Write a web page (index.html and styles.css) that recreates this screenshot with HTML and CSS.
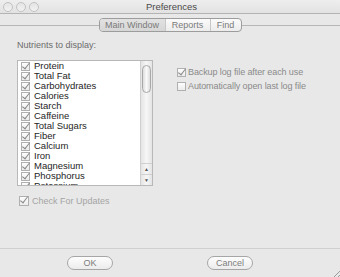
FILE: index.html
```html
<!DOCTYPE html>
<html lang="en">
<head>
    <meta charset="UTF-8">
    <title>Preferences</title>
    <link rel="stylesheet" href="styles.css">
</head>
<body>
<div class="window">
    <div class="titlebar">
        <div class="lights">
            <span class="light"></span>
            <span class="light"></span>
            <span class="light"></span>
        </div>
        <div class="title">Preferences</div>
    </div>

    <div class="tabbar">
        <div class="rule"></div>
        <div class="tabs">
            <span class="tab tab-main selected">Main Window</span>
            <span class="tab tab-reports">Reports</span>
            <span class="tab tab-find">Find</span>
        </div>
        <div class="rule"></div>
    </div>

    <div class="content">
        <div class="left">
            <div class="label">Nutrients to display:</div>
            <div class="listbox">
                <ul class="items">
                    <li><span class="box checked"></span>Protein</li>
                    <li><span class="box checked"></span>Total Fat</li>
                    <li><span class="box checked"></span>Carbohydrates</li>
                    <li><span class="box checked"></span>Calories</li>
                    <li><span class="box checked"></span>Starch</li>
                    <li><span class="box checked"></span>Caffeine</li>
                    <li><span class="box checked"></span>Total Sugars</li>
                    <li><span class="box checked"></span>Fiber</li>
                    <li><span class="box checked"></span>Calcium</li>
                    <li><span class="box checked"></span>Iron</li>
                    <li><span class="box checked"></span>Magnesium</li>
                    <li><span class="box checked"></span>Phosphorus</li>
                    <li><span class="box checked"></span>Potassium</li>
                </ul>
                <div class="scrollbar">
                    <div class="track"><div class="thumb"></div></div>
                    <div class="arrow">&#9650;</div>
                    <div class="arrow">&#9660;</div>
                </div>
            </div>
            <div class="option updates"><span class="box checked"></span>Check For Updates</div>
        </div>
        <div class="right">
            <div class="option"><span class="box checked"></span>Backup log file after each use</div>
            <div class="option"><span class="box"></span>Automatically open last log file</div>
        </div>
    </div>

    <div class="footer">
        <span class="button">OK</span>
        <span class="button">Cancel</span>
        <div class="grip"></div>
    </div>
</div>
</body>
</html>
```

FILE: styles.css
```css
body {
    margin: 0;
    font-family: "Liberation Sans", Arial, sans-serif;
    background-color: #e8e8e8;
}

.window {
    width: 340px;
    height: 277px;
    display: flex;
    flex-direction: column;
    overflow: hidden;
}

/* title bar */
.titlebar {
    height: 13px;
    border-bottom: 1px solid #b4b4b4;
    background: linear-gradient(#eeeeee, #e2e2e2);
    display: flex;
    align-items: center;
}

.lights {
    display: flex;
    gap: 3px;
    padding-left: 3px;
}

.light {
    width: 8px;
    height: 8px;
    border-radius: 50%;
    border: 1px solid #c2c2c2;
    background: linear-gradient(#e4e4e4, #f2f2f2);
}

.title {
    flex: 1;
    text-align: center;
    font-size: 9.5px;
    color: #4a4a4a;
    margin-right: 36px;
    line-height: 13px;
}

/* tab control */
.tabbar {
    display: flex;
    align-items: center;
    margin-top: 4px;
    height: 14px;
}

.rule {
    flex: 1;
    height: 1px;
    background-color: #b6b6b6;
}

.tabs {
    display: flex;
    height: 12px;
    border: 1px solid #9c9c9c;
    border-radius: 4px;
    background: linear-gradient(#fbfbfb, #ececec);
    overflow: hidden;
}

.tab {
    font-size: 9px;
    line-height: 12px;
    color: #7a7a7a;
    text-align: center;
    border-left: 1px solid #c8c8c8;
}

.tab-main {
    width: 65px;
    border-left: none;
}

.tab-reports {
    width: 44px;
}

.tab-find {
    width: 30px;
}

.tab.selected {
    background: linear-gradient(#e2e2e2, #d6d6d6);
}

/* main content */
.content {
    flex: 1;
    display: flex;
}

.left {
    width: 136px;
    padding-left: 17px;
}

.label {
    margin-top: 8px;
    font-size: 9px;
    line-height: 11px;
    color: #6c6c6c;
}

.listbox {
    margin-top: 9px;
    height: 124px;
    border: 1px solid #b8b8b8;
    background-color: #fff;
    display: flex;
    overflow: hidden;
}

.items {
    list-style: none;
    margin: 0;
    padding: 0 0 0 3px;
    flex: 1;
}

.items li {
    height: 10px;
    line-height: 10px;
    font-size: 9.5px;
    color: #1e1e1e;
    display: flex;
    align-items: center;
}

.box {
    width: 7px;
    height: 7px;
    border: 1px solid #b0b0b0;
    background: linear-gradient(#fdfdfd, #ececec);
    margin-right: 4px;
    position: relative;
    flex: none;
}

.box.checked::after {
    content: "";
    position: absolute;
    left: 2px;
    top: -2px;
    width: 3px;
    height: 7px;
    border-right: 1.5px solid #8a8a8a;
    border-bottom: 1.5px solid #8a8a8a;
    transform: rotate(38deg);
}

.scrollbar {
    width: 11px;
    border-left: 1px solid #d0d0d0;
    background: linear-gradient(90deg, #e4e4e4, #f6f6f6, #e4e4e4);
    display: flex;
    flex-direction: column;
}

.track {
    flex: 1;
    padding: 4px 1px 0;
}

.thumb {
    height: 26px;
    border: 1px solid #a8a8a8;
    border-radius: 5px;
    background: linear-gradient(90deg, #dcdcdc, #fafafa, #dcdcdc);
}

.arrow {
    height: 10px;
    border-top: 1px solid #d0d0d0;
    font-size: 5px;
    line-height: 10px;
    text-align: center;
    color: #555;
}

.option {
    display: flex;
    align-items: center;
    height: 10px;
    font-size: 9px;
    letter-spacing: -0.1px;
    color: #8a8a8a;
    margin-bottom: 4px;
}

.updates {
    margin-top: 10px;
    margin-left: 2px;
    letter-spacing: 0;
    color: #a4a4a4;
}

.updates .box {
    width: 8px;
    height: 8px;
    margin-right: 3px;
}

.right {
    margin-left: 24px;
    padding-top: 35px;
}

.right .box {
    margin-right: 2px;
}

/* footer buttons */
.footer {
    height: 29px;
    border-top: 1px solid #cfcfcf;
    display: flex;
    align-items: flex-start;
    padding-top: 7px;
    box-sizing: border-box;
    position: relative;
}

.button {
    width: 44px;
    height: 12px;
    border: 1px solid #a6a6a6;
    border-radius: 7px;
    background: linear-gradient(#fdfdfd, #ececec);
    font-size: 9px;
    line-height: 12px;
    text-align: center;
    color: #7c7c7c;
    margin-left: 67px;
}

.button + .button {
    margin-left: 94px;
}

.grip {
    position: absolute;
    right: 0;
    bottom: 0;
    width: 9px;
    height: 9px;
    background: repeating-linear-gradient(135deg, transparent 0 2px, #9a9a9a 2px 3px);
    clip-path: polygon(100% 0, 100% 100%, 0 100%);
}
```
